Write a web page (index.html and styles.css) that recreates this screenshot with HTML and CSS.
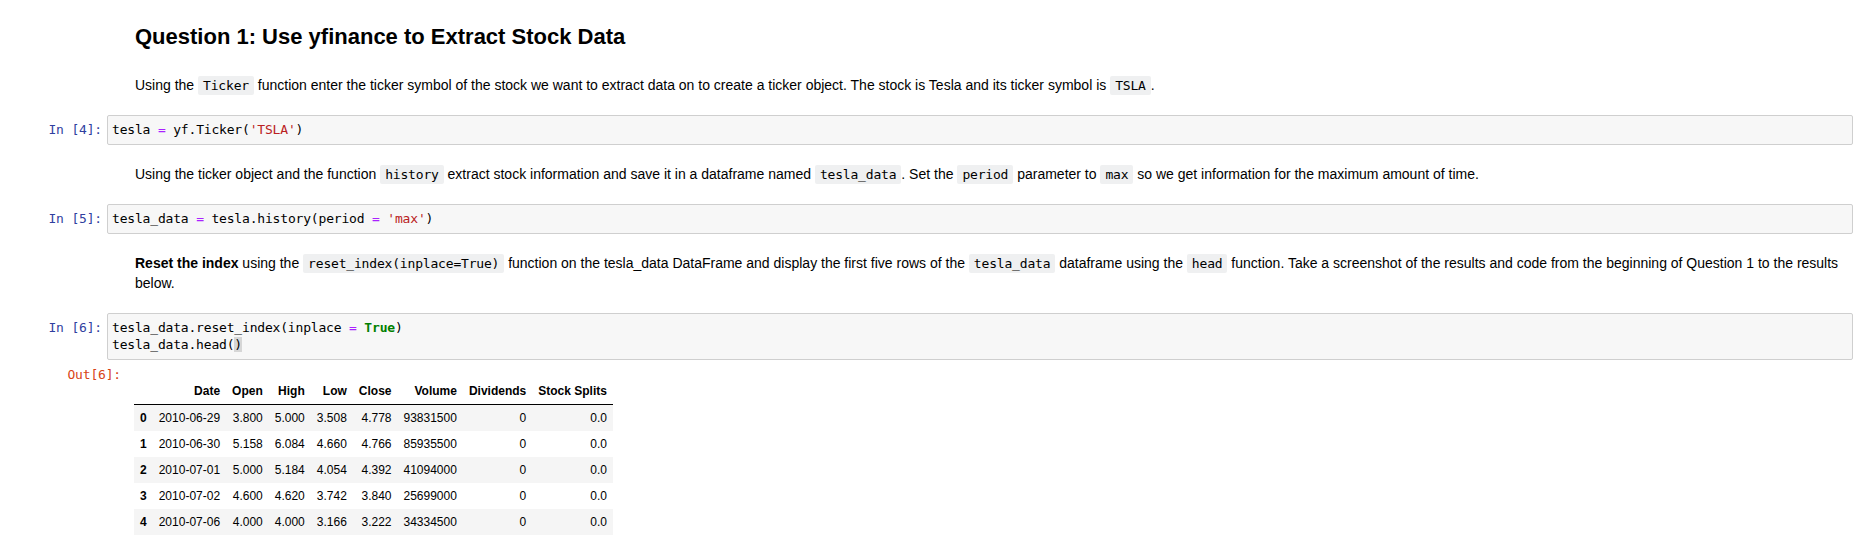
FILE: index.html
```html
<!DOCTYPE html>
<html>
<head>
<meta charset="utf-8">
<title>Question 1</title>
<link rel="stylesheet" href="styles.css">
</head>
<body>
<div class="notebook">
  <div class="cell md heading-cell">
    <div class="prompt"></div>
    <div class="md-body"><h2>Question 1: Use yfinance to Extract Stock Data</h2></div>
  </div>
  <div class="cell md first-md">
    <div class="prompt"></div>
    <div class="md-body"><p>Using the <code>Ticker</code> function enter the ticker symbol of the stock we want to extract data on to create a ticker object. The stock is Tesla and its ticker symbol is <code>TSLA</code>.</p></div>
  </div>
  <div class="cell code-cell">
    <div class="prompt in">In&nbsp;[4]:</div>
    <div class="input"><pre>tesla <span class="op">=</span> yf.Ticker(<span class="str">'TSLA'</span>)</pre></div>
  </div>
  <div class="cell md">
    <div class="prompt"></div>
    <div class="md-body"><p>Using the ticker object and the function <code>history</code> extract stock information and save it in a dataframe named <code>tesla_data</code>. Set the <code>period</code> parameter to <code>max</code> so we get information for the maximum amount of time.</p></div>
  </div>
  <div class="cell code-cell">
    <div class="prompt in">In&nbsp;[5]:</div>
    <div class="input"><pre>tesla_data <span class="op">=</span> tesla.history(period <span class="op">=</span> <span class="str">'max'</span>)</pre></div>
  </div>
  <div class="cell md">
    <div class="prompt"></div>
    <div class="md-body"><p><strong>Reset the index</strong> using the <code>reset_index(inplace=True)</code> function on the tesla_data DataFrame and display the first five rows of the <code>tesla_data</code> dataframe using the <code>head</code> function. Take a screenshot of the results and code from the beginning of Question 1 to the results below.</p></div>
  </div>
  <div class="cell code-cell">
    <div class="prompt in">In&nbsp;[6]:</div>
    <div class="input"><pre>tesla_data.reset_index(inplace <span class="op">=</span> <span class="kw">True</span>)
tesla_data.head(<span class="bracket">)</span></pre></div>
  </div>
  <div class="output-row">
    <div class="prompt out">Out[6]:</div>
    <div class="output">
      <table class="dataframe">
        <thead>
          <tr><th></th><th>Date</th><th>Open</th><th>High</th><th>Low</th><th>Close</th><th>Volume</th><th>Dividends</th><th>Stock Splits</th></tr>
        </thead>
        <tbody>
          <tr><th>0</th><td>2010-06-29</td><td>3.800</td><td>5.000</td><td>3.508</td><td>4.778</td><td>93831500</td><td>0</td><td>0.0</td></tr>
          <tr><th>1</th><td>2010-06-30</td><td>5.158</td><td>6.084</td><td>4.660</td><td>4.766</td><td>85935500</td><td>0</td><td>0.0</td></tr>
          <tr><th>2</th><td>2010-07-01</td><td>5.000</td><td>5.184</td><td>4.054</td><td>4.392</td><td>41094000</td><td>0</td><td>0.0</td></tr>
          <tr><th>3</th><td>2010-07-02</td><td>4.600</td><td>4.620</td><td>3.742</td><td>3.840</td><td>25699000</td><td>0</td><td>0.0</td></tr>
          <tr><th>4</th><td>2010-07-06</td><td>4.000</td><td>4.000</td><td>3.166</td><td>3.222</td><td>34334500</td><td>0</td><td>0.0</td></tr>
        </tbody>
      </table>
    </div>
  </div>
</div>
</body>
</html>
```
FILE: styles.css
```css
html, body {
  margin: 0;
  padding: 0;
  background: #ffffff;
}

body {
  font-family: "Liberation Sans", Arial, Helvetica, sans-serif;
  font-size: 14px;
  line-height: 20px;
  color: #000000;
}

.notebook {
  padding: 0 14px 0 0;
}

.cell {
  display: flex;
  align-items: flex-start;
}

.prompt {
  flex: 0 0 107px;
  box-sizing: border-box;
  padding-right: 5px;
  text-align: right;
  font-family: "DejaVu Sans Mono", "Liberation Mono", monospace;
  font-size: 13px;
  letter-spacing: -0.18px;
  line-height: 17px;
  white-space: nowrap;
}

.prompt.in {
  color: #303f9f;
  padding-top: 6px;
}

.md {
  padding: 19px 0 20px 0;
}

.heading-cell {
  padding: 24px 0 6px 0;
}

.first-md {
  padding-top: 19px;
}

.md-body {
  flex: 1 1 auto;
  min-width: 0;
  padding-left: 28px;
}

.md-body h2 {
  margin: 0;
  font-size: 22px;
  line-height: 26px;
  font-weight: bold;
}

.md-body p {
  margin: 0;
  line-height: 20px;
}

.md-body code {
  font-family: "DejaVu Sans Mono", "Liberation Mono", monospace;
  font-size: 13px;
  line-height: 13px;
  letter-spacing: -0.18px;
  background: #eff0f1;
  padding: 2px 5px;
  border-radius: 2px;
  color: #000;
}

.input {
  flex: 1 1 auto;
  min-width: 0;
  background: #f7f7f7;
  border: 1px solid #cfcfcf;
  border-radius: 2px;
  padding: 5px 4px 6px 4px;
}

.input pre {
  margin: 0;
  font-family: "DejaVu Sans Mono", "Liberation Mono", monospace;
  font-size: 13px;
  letter-spacing: -0.18px;
  line-height: 17px;
  color: #000;
}

.op { color: #aa22ff; }
.str { color: #ba2121; }
.kw { color: #008000; font-weight: bold; }
.bracket { background: #d6d6d6; }

.output-row {
  display: flex;
  align-items: flex-start;
}

.prompt.out {
  flex: 0 0 121px;
  padding-right: 0;
  padding-top: 6px;
  color: #d84315;
}

.output {
  padding: 18px 0 0 13px;
}

.dataframe {
  border-collapse: collapse;
  border-spacing: 0;
  font-family: "Liberation Sans", Arial, Helvetica, sans-serif;
  font-size: 12px;
  line-height: 14px;
  color: #000;
}

.dataframe th,
.dataframe td {
  text-align: right;
  padding: 6px;
  vertical-align: middle;
  white-space: nowrap;
}

.dataframe th {
  font-weight: bold;
}

.dataframe thead {
  border-bottom: 1px solid #000;
}

.dataframe tbody tr:nth-child(odd) {
  background: #f5f5f5;
}
```
